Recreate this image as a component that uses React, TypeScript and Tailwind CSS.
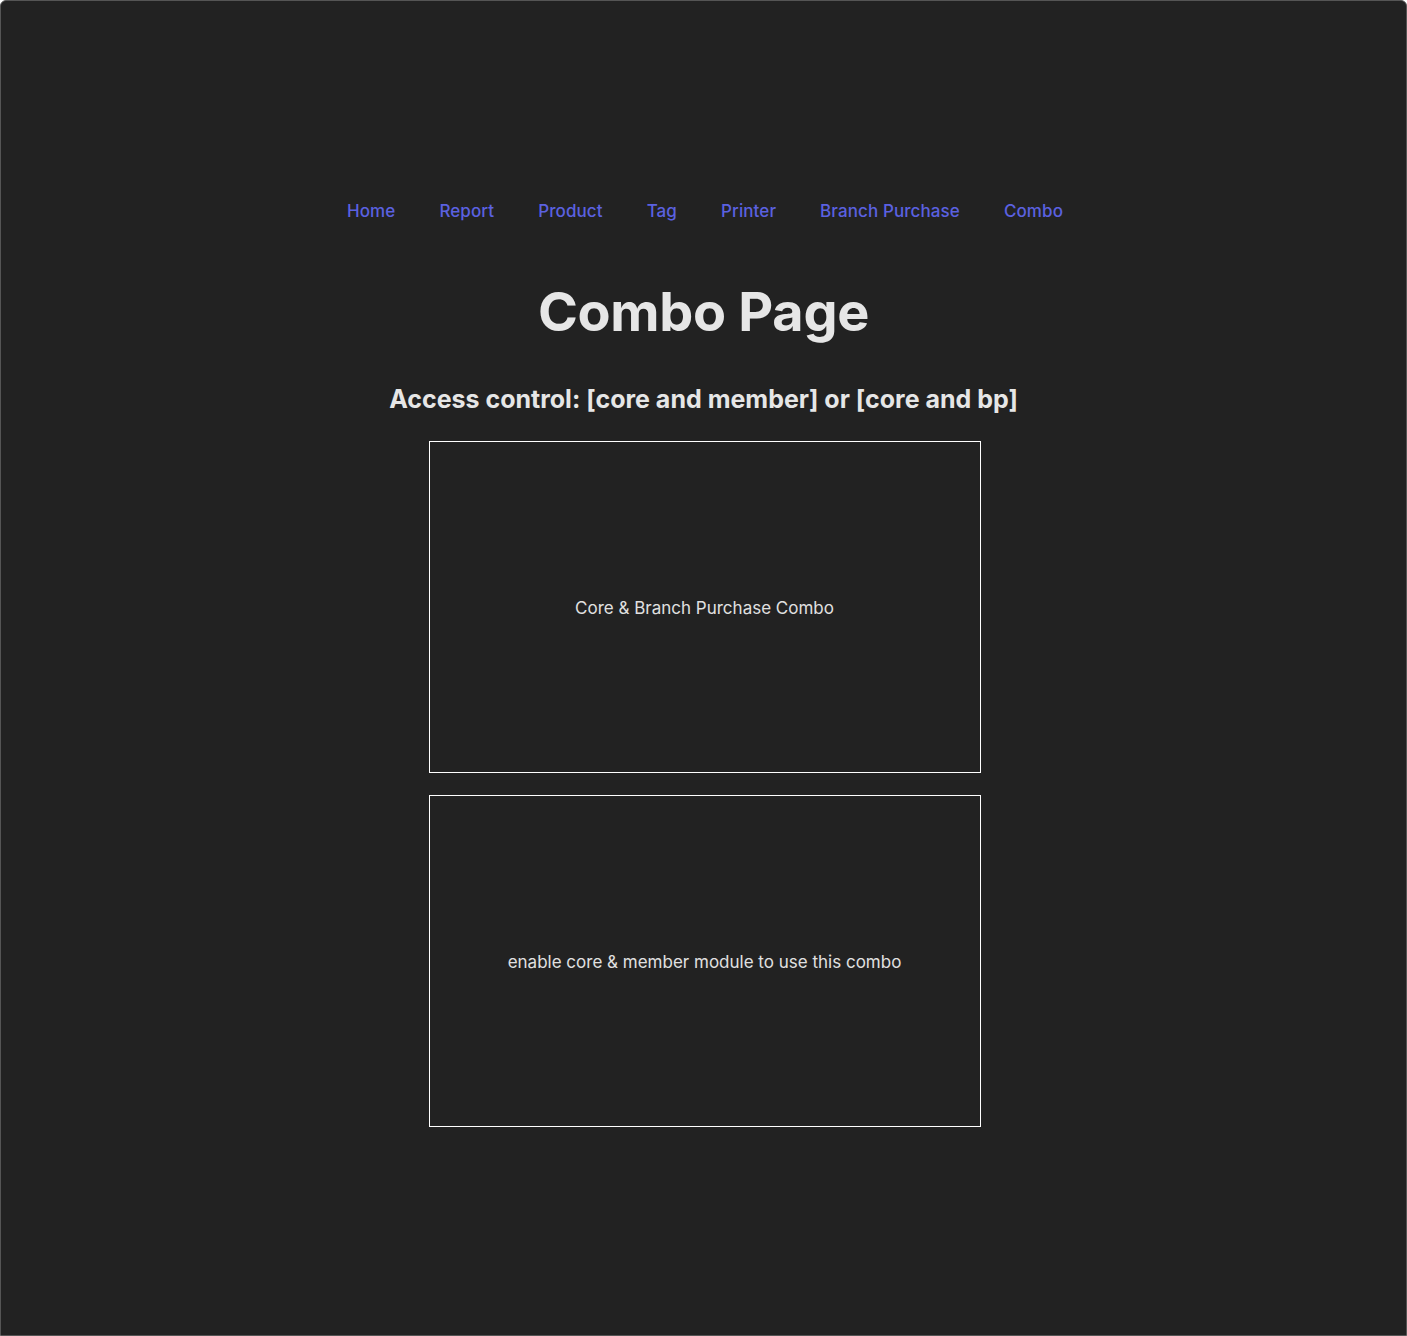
const links = ['Home', 'Report', 'Product', 'Tag', 'Printer', 'Branch Purchase', 'Combo']

function ComboCard({ text }: { text: string }) {
  return (
    <div className="w-[552px] h-[332px] pt-[4px] border border-white flex items-center justify-center text-[17px] text-[#e0e0e0]">
      {text}
    </div>
  )
}

export default function App() {
  return (
    <div
      className="min-h-[1336px] bg-[#222222] border border-[#555555] rounded-t-[6px] flex flex-col items-center text-[#e6e6e6]"
      style={{ fontFamily: 'Inter, "Noto Sans", sans-serif' }}
    >
      <nav className="mt-[197px] ml-[3px] flex gap-[44px]">
        {links.map((l) => (
          <a key={l} href="#" className="text-[17px] font-medium leading-[26px] tracking-[0.1px] text-[#5b61e0]">
            {l}
          </a>
        ))}
      </nav>

      <h1 className="mt-[57px] text-[54px] font-bold leading-[62px] tracking-[-0.3px]">Combo Page</h1>

      <h2 className="mt-[40px] text-[25px] font-bold leading-[32px]">
        Access control: [core and member] or [core and bp]
      </h2>

      <div className="mt-[26px] ml-[2px] flex flex-col gap-[22px]">
        <ComboCard text="Core & Branch Purchase Combo" />
        <ComboCard text="enable core & member module to use this combo" />
      </div>
    </div>
  )
}
